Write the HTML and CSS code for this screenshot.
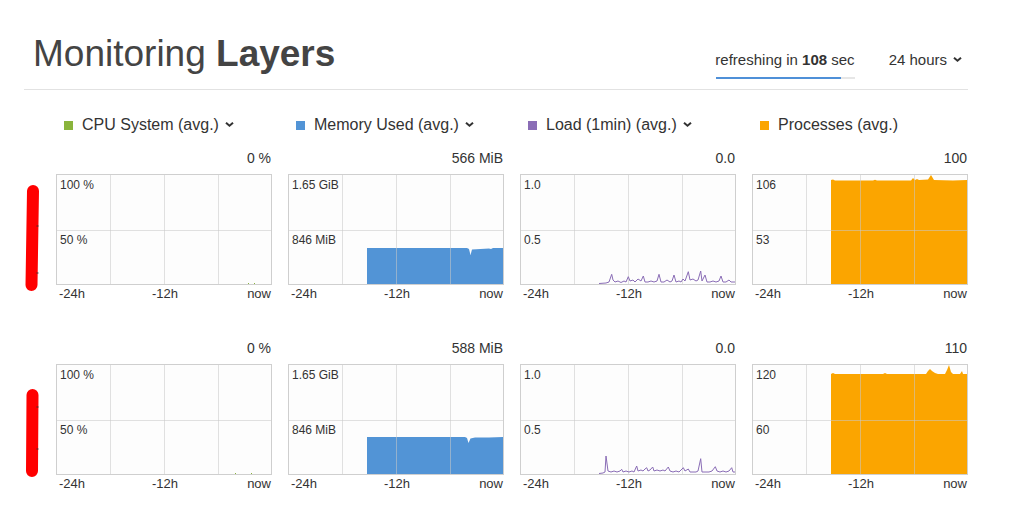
FILE: index.html
```html
<!DOCTYPE html>
<html>
<head>
<meta charset="utf-8">
<link rel="stylesheet" href="styles.css">
</head>
<body>
<div class="page">
  <header class="top">
    <h1 class="title">Monitoring <b>Layers</b></h1>
    <div class="controls">
      <div class="refresh">
        <div class="refresh-text">refreshing in <b>108</b> sec</div>
        <div class="progress"><div class="progress-fill"></div></div>
      </div>
      <div class="range">24 hours <svg class="chev" viewBox="0 0 9 5" width="9" height="5"><path d="M1 0.8 L4.5 3.8 L8 0.8" /></svg></div>
    </div>
  </header>

  <div class="legend">
    <div class="legend-item"><span class="swatch green"></span>CPU System (avg.) <svg class="chev" viewBox="0 0 9 5" width="9" height="5"><path d="M1 0.8 L4.5 3.8 L8 0.8" /></svg></div>
    <div class="legend-item"><span class="swatch blue"></span>Memory Used (avg.) <svg class="chev" viewBox="0 0 9 5" width="9" height="5"><path d="M1 0.8 L4.5 3.8 L8 0.8" /></svg></div>
    <div class="legend-item"><span class="swatch purple"></span>Load (1min) (avg.) <svg class="chev" viewBox="0 0 9 5" width="9" height="5"><path d="M1 0.8 L4.5 3.8 L8 0.8" /></svg></div>
    <div class="legend-item"><span class="swatch orange"></span>Processes (avg.)</div>
  </div>

  <div class="grid">
    <!-- Row 1 -->
    <div class="cell">
      <div class="value">0 %</div>
      <div class="chart">
        <svg class="plot" viewBox="0 0 214 109" preserveAspectRatio="none">
          <path class="gl" d="M53.5 0V109M107.5 0V109M161.5 0V109M0 55.5H214" />
          <path d="M191 108.5h1M197 108.5h1" stroke="#8ab43c" stroke-width="1"/>
        </svg>
        <div class="half"><span class="ylab">100 %</span></div>
        <div class="half"><span class="ylab">50 %</span></div>
      </div>
      <div class="axis"><span>-24h</span><span>-12h</span><span>now</span></div>
    </div>
    <div class="cell">
      <div class="value">566 MiB</div>
      <div class="chart">
        <svg class="plot" viewBox="0 0 214 109" preserveAspectRatio="none">
          <path fill="#5294d6" d="M78 109V73H178L180 74L181.5 80L183 74.5L200 73.5L202 74L204 73L214 73V109Z" />
          <path class="gl" d="M53.5 0V109M107.5 0V109M161.5 0V109M0 55.5H214" />
        </svg>
        <div class="half"><span class="ylab">1.65 GiB</span></div>
        <div class="half"><span class="ylab">846 MiB</span></div>
      </div>
      <div class="axis"><span>-24h</span><span>-12h</span><span>now</span></div>
    </div>
    <div class="cell">
      <div class="value">0.0</div>
      <div class="chart">
        <svg class="plot" viewBox="0 0 214 109" preserveAspectRatio="none">
          <path class="gl" d="M53.5 0V109M107.5 0V109M161.5 0V109M0 55.5H214" />
          <path class="load" d="M78 108.5L85 108L88 107L90.7 99.3L92 105L94 107L97 106L100 107.5L103 106L105 107L107.3 101.7L109 106L112 105L114 107L117 104L120 106L122.3 101L124 107L127 107L130 106L133 107L136 106L138 99.3L140 107L143 107L146 105L149 107L151 106L153 100L155 107L158 106L160 107L162 104L164 106L167.3 96.7L169 105L172 104L175 106L177 105L179.7 96L181 106L184 100L186 107L189 107L192 106L195 107L198 106L200 101L202 107L205 107L208 105L210 107L214 107" />
        </svg>
        <div class="half"><span class="ylab">1.0</span></div>
        <div class="half"><span class="ylab">0.5</span></div>
      </div>
      <div class="axis"><span>-24h</span><span>-12h</span><span>now</span></div>
    </div>
    <div class="cell">
      <div class="value">100</div>
      <div class="chart">
        <svg class="plot" viewBox="0 0 214 109" preserveAspectRatio="none">
          <path fill="#fba500" d="M78 109V5L80 4.5L82 5.5L120 5.5L122 4.8L124 5.5L158 5.5L160 3L162 5L164 4L166 5L175 4.5L178 0L181 5L200 5.5L214 5V109Z" />
          <path class="gl" d="M53.5 0V109M107.5 0V109M161.5 0V109M0 55.5H214" />
        </svg>
        <div class="half"><span class="ylab">106</span></div>
        <div class="half"><span class="ylab">53</span></div>
      </div>
      <div class="axis"><span>-24h</span><span>-12h</span><span>now</span></div>
    </div>

    <!-- Row 2 -->
    <div class="cell">
      <div class="value">0 %</div>
      <div class="chart">
        <svg class="plot" viewBox="0 0 214 109" preserveAspectRatio="none">
          <path class="gl" d="M53.5 0V109M107.5 0V109M161.5 0V109M0 55.5H214" />
          <path d="M178 108.5h1M194 108.5h1" stroke="#8ab43c" stroke-width="1"/>
        </svg>
        <div class="half"><span class="ylab">100 %</span></div>
        <div class="half"><span class="ylab">50 %</span></div>
      </div>
      <div class="axis"><span>-24h</span><span>-12h</span><span>now</span></div>
    </div>
    <div class="cell">
      <div class="value">588 MiB</div>
      <div class="chart">
        <svg class="plot" viewBox="0 0 214 109" preserveAspectRatio="none">
          <path fill="#5294d6" d="M78 109V72H176L178 73L179.5 78L181.5 73.5L186 72.5L200 72.5L214 72V109Z" />
          <path class="gl" d="M53.5 0V109M107.5 0V109M161.5 0V109M0 55.5H214" />
        </svg>
        <div class="half"><span class="ylab">1.65 GiB</span></div>
        <div class="half"><span class="ylab">846 MiB</span></div>
      </div>
      <div class="axis"><span>-24h</span><span>-12h</span><span>now</span></div>
    </div>
    <div class="cell">
      <div class="value">0.0</div>
      <div class="chart">
        <svg class="plot" viewBox="0 0 214 109" preserveAspectRatio="none">
          <path class="gl" d="M53.5 0V109M107.5 0V109M161.5 0V109M0 55.5H214" />
          <path class="load" d="M78 108.5L82 108L84 107L85 91L87 106L90 107L93 106L96 107L99 106L100.7 104.3L102 107L105 106L108 107L111 106L113 107L115.7 101L117 106L120 105L122 106L124 104L125.7 102.7L127 106L129 105L131.7 102L133 106L136 105L139 106L142 105L144 106L147.3 102L149 106L152 107L155 106L158 107L160 105L162.3 102.7L164 106L167.3 104L169 107L172 107L175 107L177 106L179.7 93.7L181 107L185 107L188 107L191 106L194.3 101.7L196 106L199 107L202 106L205 107L208 106L210.7 102.7L212 107L214 107" />
        </svg>
        <div class="half"><span class="ylab">1.0</span></div>
        <div class="half"><span class="ylab">0.5</span></div>
      </div>
      <div class="axis"><span>-24h</span><span>-12h</span><span>now</span></div>
    </div>
    <div class="cell">
      <div class="value">110</div>
      <div class="chart">
        <svg class="plot" viewBox="0 0 214 109" preserveAspectRatio="none">
          <path fill="#fba500" d="M78 109V9L80 8L82 9L130 9L132 8L134 9L173 9L175 6L177 4L179 6L182 8L185 9L192 9L194 5L196 0L198 7L200 9L207 9L209 6L210 9L214 9V109Z" />
          <path class="gl" d="M53.5 0V109M107.5 0V109M161.5 0V109M0 55.5H214" />
        </svg>
        <div class="half"><span class="ylab">120</span></div>
        <div class="half"><span class="ylab">60</span></div>
      </div>
      <div class="axis"><span>-24h</span><span>-12h</span><span>now</span></div>
    </div>
  </div>

  <svg class="marks" width="60" height="530" viewBox="0 0 60 530">
    <path d="M33 191L31.5 285" />
    <path d="M32.5 395L32 471" />
    <path class="tick" d="M36.5 226h2M36.5 273h2M36.5 407h2M36.5 449h2" />
  </svg>
</div>
</body>
</html>
```

FILE: styles.css
```css
* { box-sizing: border-box; }

html, body {
  margin: 0;
  padding: 0;
  background: #fff;
}

body {
  font-family: "Liberation Sans", Arial, Helvetica, sans-serif;
  color: #333;
}

.page {
  position: relative;
  width: 1010px;
  height: 530px;
  padding: 0 42px 0 24px;
}

/* Header */
.top {
  display: flex;
  align-items: flex-start;
  height: 90px;
  border-bottom: 1px solid #e2e2e2;
}

.title {
  margin: 0 0 0 9px;
  padding-top: 34px;
  font-size: 37px;
  line-height: 40px;
  font-weight: normal;
  color: #444;
}

.title b {
  font-weight: bold;
}

.controls {
  margin-left: auto;
  display: flex;
  align-items: flex-start;
  gap: 34px;
  padding-top: 50px;
  padding-right: 6px;
}

.refresh-text,
.range {
  font-size: 15px;
  line-height: 20px;
  color: #333;
}

.refresh-text b {
  font-weight: bold;
}

.progress {
  margin: 7px 0 0 1px;
  height: 2px;
  background: #e6e6e6;
}

.progress-fill {
  width: 90%;
  height: 100%;
  background: #4f90d8;
}

.range {
  display: flex;
  align-items: center;
}

.chev {
  display: inline-block;
  margin-left: 6px;
  margin-bottom: 2px;
  fill: none;
  stroke: #333;
  stroke-width: 2;
  stroke-linecap: butt;
  stroke-linejoin: miter;
  overflow: visible;
}

/* Legend */
.legend {
  margin: 25px 0 0 32px;
  display: grid;
  grid-template-columns: repeat(4, 216px);
  column-gap: 16px;
}

.legend-item {
  display: flex;
  align-items: center;
  padding-left: 8px;
  font-size: 16px;
  line-height: 20px;
  white-space: nowrap;
}

.legend-item .chev {
  margin-left: 6px;
}

.swatch {
  display: inline-block;
  width: 9px;
  height: 9px;
  margin-right: 9px;
  margin-top: 1px;
}

.green { background: #8ab43c; }
.blue { background: #5294d6; }
.purple { background: #8a6db6; }
.orange { background: #fba500; }

/* Charts */
.grid {
  margin: 14px 0 0 32px;
  display: grid;
  grid-template-columns: repeat(4, 216px);
  column-gap: 16px;
  row-gap: 37px;
}

.cell {
  display: flex;
  flex-direction: column;
}

.value {
  text-align: right;
  font-size: 14px;
  line-height: 18px;
  margin-bottom: 7px;
  padding-right: 1px;
}

.chart {
  position: relative;
  width: 216px;
  height: 111px;
  border: 1px solid #cfcfcf;
  background: #fdfdfd;
  display: flex;
  flex-direction: column;
}

.plot {
  position: absolute;
  left: 0;
  top: 0;
  width: 214px;
  height: 109px;
}

.gl {
  fill: none;
  stroke: rgba(200, 200, 200, 0.55);
  stroke-width: 1;
}

.load {
  fill: none;
  stroke: #8a6db6;
  stroke-width: 1;
  stroke-linejoin: round;
}

.half {
  position: relative;
  height: 55px;
  padding: 0 3px;
}

.ylab {
  font-size: 12px;
  line-height: 14px;
  color: #333;
}

.axis {
  display: grid;
  grid-template-columns: 1fr auto 1fr;
  font-size: 13px;
  line-height: 16px;
  padding: 1px 1px 0 3px;
}

.axis span:nth-child(1) { justify-self: start; }
.axis span:nth-child(2) { justify-self: center; }
.axis span:nth-child(3) { justify-self: end; }

/* Red annotation marks over the page */
.marks {
  position: absolute;
  left: 0;
  top: 0;
  fill: none;
  stroke: #ff0000;
  stroke-width: 12;
  stroke-linecap: round;
}

.marks .tick {
  stroke: #333;
  stroke-width: 1;
  stroke-linecap: butt;
}
```
